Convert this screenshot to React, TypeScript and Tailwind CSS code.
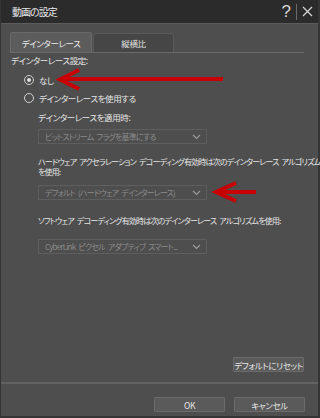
import React from 'react';

const jp = "font-['Noto_Sans_CJK_JP','Noto_Sans',sans-serif] [font-feature-settings:'palt']";
const txt = 'text-[8.5px] leading-[10px] tracking-[-0.4px] [word-spacing:3px] whitespace-nowrap';
const tight = 'text-[8px] leading-[10px] tracking-[-0.8px] [word-spacing:2px] whitespace-nowrap';

const Radio = ({ checked, label }: { checked?: boolean; label: string }) => (
    <div className="flex items-center h-[12px] pl-[13px] gap-[5px]">
        <span className="w-[10px] h-[10px] rounded-full border border-[#d0d0d0] flex items-center justify-center">
            {checked && <span className="w-[4px] h-[4px] rounded-full bg-[#e0e0e0]" />}
        </span>
        <span className={`${txt} text-[#e6e6e6]`}>{label}</span>
    </div>
);

const Select = ({ value }: { value: string }) => (
    <div className="ml-[27px] w-[169px] h-[15px] border border-[#5e5e5e] flex items-center pl-[6px] pr-[5px]">
        <span className={`${tight} text-[#8a8a8a] flex-1 overflow-hidden`}>{value}</span>
        <svg width="9" height="6" viewBox="0 0 9 6" className="shrink-0">
            <path d="M1 1l3.5 3.5L8 1" fill="none" stroke="#9a9a9a" strokeWidth="1.2" />
        </svg>
    </div>
);

const Btn = ({ children }: { children: React.ReactNode }) => (
    <div className={`w-[71px] h-[15px] bg-[#5a5a5a] border border-[#6b6b6b] rounded-[1px] flex items-center justify-center ${txt} text-[#e6e6e6]`}>
        {children}
    </div>
);

export default function App() {
    return (
        <div className={`relative w-[320px] h-[418px] bg-[#4e4e4e] border-l border-r-2 border-b-2 border-[#353535] flex flex-col ${jp}`}>
            {/* title bar */}
            <div className="h-[23px] bg-[#2b2b2b] flex items-center pl-[11px] pr-[3px] shrink-0">
                <span className="text-[10px] tracking-[-1px] text-[#e8e8e8]">動画の設定</span>
                <div className="ml-auto flex items-center h-full">
                    <span className="text-[17px] leading-none text-[#d8d8d8] font-['Liberation_Sans',sans-serif] font-light">?</span>
                    <span className="w-px h-[16px] bg-[#6a6a6a] mx-[5px]" />
                    <svg width="11" height="11" viewBox="0 0 11 11" className="mr-[2px]">
                        <path d="M1 1l9 9M10 1l-9 9" stroke="#d8d8d8" strokeWidth="1.2" />
                    </svg>
                </div>
            </div>
            <div className="h-px bg-[#5c5c5c] shrink-0" />

            {/* tabs */}
            <div className="flex items-end pl-[9px] mt-[8px] gap-[1px] h-[20px] shrink-0">
                <div className={`w-[82px] h-[20px] bg-[#5c5c5c] border border-b-0 border-[#6a6a6a] rounded-t-[3px] flex items-center justify-center ${txt} text-[#ececec]`}>
                    デインターレース
                </div>
                <div className={`w-[81px] h-[19px] bg-[#464646] border border-b-0 border-[#5a5a5a] rounded-t-[3px] flex items-center justify-center ${txt} text-[#e0e0e0]`}>
                    縦横比
                </div>
            </div>
            <div className="h-px bg-[#6a6a6a] ml-[9px] mr-[14px] shrink-0" />

            {/* content */}
            <div className="flex flex-col pl-[10px]">
                <div className={`mt-[2px] ${txt} text-[#e6e6e6]`}>デインターレース設定:</div>
                <div className="mt-[9px]">
                    <Radio checked label="なし" />
                </div>
                <div className="mt-[6px]">
                    <Radio label="デインターレースを使用する" />
                </div>
                <div className={`mt-[8px] pl-[27px] ${txt} text-[#e6e6e6]`}>デインターレースを適用時:</div>
                <div className="mt-[7px]">
                    <Select value="ビットストリーム フラグを基準にする" />
                </div>
                <div className={`mt-[13px] pl-[27px] ${tight} text-[#e6e6e6]`}>
                    ハードウェア アクセラレーション デコーディング有効時は次のデインターレース アルゴリズム
                    <br />
                    を使用:
                </div>
                <div className="mt-[8px]">
                    <Select value="デフォルト (ハードウェア デインターレース)" />
                </div>
                <div className={`mt-[16px] pl-[27px] ${tight} text-[#e6e6e6]`}>
                    ソフトウェア デコーディング有効時は次のデインターレース アルゴリズムを使用:
                </div>
                <div className="mt-[13px]">
                    <Select value="CyberLink ピクセル アダプティブ スマート..." />
                </div>
            </div>

            <div className="flex-1" />

            {/* reset */}
            <div className="flex justify-end pr-[14px]">
                <Btn>デフォルトにリセット</Btn>
            </div>
            <div className="mt-[10px] h-[2px] bg-[#626262] shrink-0" />

            {/* footer */}
            <div className="flex justify-end gap-[9px] pr-[13px] mt-[13px] mb-[4px]">
                <Btn>OK</Btn>
                <Btn>キャンセル</Btn>
            </div>

            {/* red annotation arrows */}
            <svg className="absolute left-0 top-0 pointer-events-none" width="320" height="418">
                <g fill="none" stroke="#c80000" strokeWidth="4" strokeLinecap="butt" strokeLinejoin="miter">
                    <path d="M59 79H222" />
                    <path d="M78 70L59 79.5L78 89" />
                    <path d="M215 192H255" />
                    <path d="M235 183L215 192L235 201" />
                </g>
            </svg>
        </div>
    );
}
